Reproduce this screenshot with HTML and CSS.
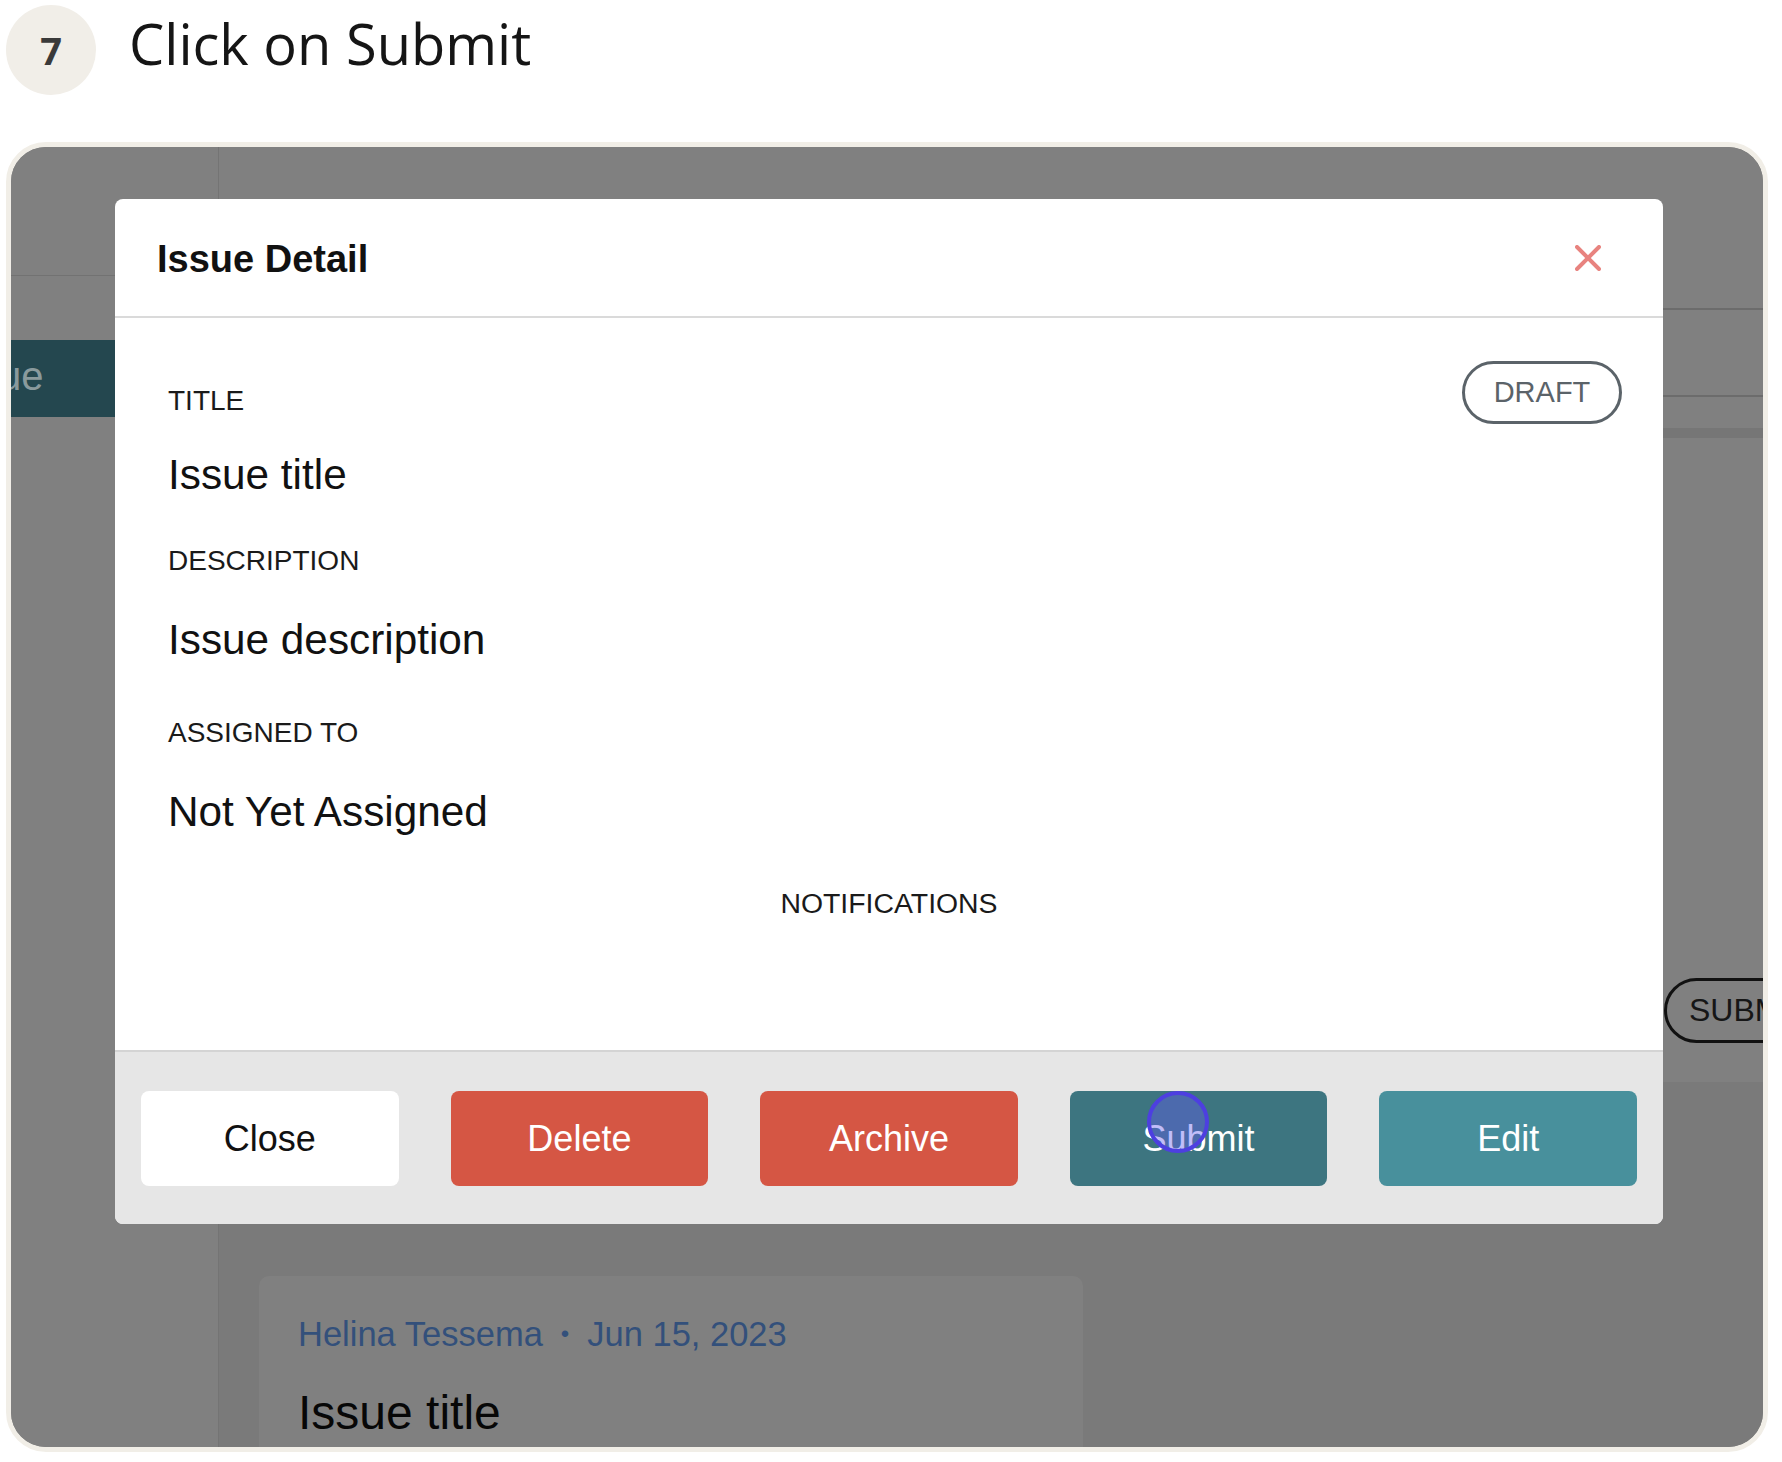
FILE: index.html
```html
<!DOCTYPE html>
<html lang="en">
<head>
<meta charset="utf-8">
<title>Click on Submit</title>
<link rel="stylesheet" href="styles.css">
</head>
<body>
<div class="page">
  <header class="step">
    <div class="step-num">7</div>
    <h1 class="step-title">Click on Submit</h1>
  </header>

  <div class="frame">
    <div class="app">
      <aside class="sidebar">
        <div class="sidebar-top"></div>
        <div class="new-btn"><span class="new-btn-label">ue</span></div>
      </aside>
      <main class="main">
        <div class="topbar"></div>
        <div class="tabs"></div>
        <div class="filters"></div>
        <div class="content">
          <div class="list">
            <div class="card">
              <div class="card-meta">Helina Tessema<span class="dot">•</span>Jun 15, 2023</div>
              <div class="card-title">Issue title</div>
            </div>
          </div>
          <div class="side">
            <span class="status-pill">SUBMITTED</span>
          </div>
        </div>
      </main>
    </div>

    <div class="modal">
      <div class="modal-header">
        <h2 class="modal-title">Issue Detail</h2>
        <svg class="modal-close" width="26" height="26" viewBox="0 0 26 26" aria-hidden="true">
          <path d="M2 2 L24 24 M24 2 L2 24" stroke="#e8837f" stroke-width="4" stroke-linecap="round" fill="none"/>
        </svg>
      </div>
      <div class="modal-body">
        <div class="body-top">
          <div class="fields">
            <div class="label">TITLE</div>
            <div class="value v-title">Issue title</div>
            <div class="label l-desc">DESCRIPTION</div>
            <div class="value v-desc">Issue description</div>
            <div class="label l-assign">ASSIGNED TO</div>
            <div class="value v-assign">Not Yet Assigned</div>
          </div>
          <span class="badge">DRAFT</span>
        </div>
        <div class="label notifications">NOTIFICATIONS</div>
      </div>
      <div class="modal-footer">
        <button class="btn btn-close">Close</button>
        <button class="btn btn-danger">Delete</button>
        <button class="btn btn-danger">Archive</button>
        <button class="btn btn-submit">Submit<span class="cursor"></span></button>
        <button class="btn btn-edit">Edit</button>
      </div>
    </div>
  </div>
</div>
</body>
</html>
```

FILE: styles.css
```css
* { box-sizing: border-box; }

html, body {
  margin: 0;
  background: #ffffff;
}

.page {
  padding: 5px 14px 0 6px;
  font-family: "Liberation Sans", Arial, sans-serif;
}

/* ---------- step header ---------- */
.step {
  display: flex;
  align-items: flex-start;
  height: 90px;
}

.step-num {
  width: 90px;
  height: 90px;
  border-radius: 50%;
  background: #f1eee8;
  color: #3a3a3a;
  font-family: "Open Sans", sans-serif;
  font-weight: 700;
  font-size: 38px;
  display: flex;
  align-items: center;
  justify-content: center;
  flex-shrink: 0;
}

.step-title {
  margin: 10px 0 0 33px;
  font-family: "Open Sans", sans-serif;
  font-weight: 400;
  font-size: 56px;
  line-height: 1;
  color: #151515;
}

/* ---------- screenshot frame ---------- */
.frame {
  position: relative;
  margin-top: 47px;
  height: 1310px;
  border: 5px solid #f1eee7;
  border-radius: 40px;
  overflow: hidden;
  background: #7a7a7a;
}

.app {
  display: flex;
  height: 100%;
}

.sidebar {
  width: 208px;
  flex-shrink: 0;
  background: #808080;
  border-right: 1px solid #747474;
}

.sidebar-top {
  height: 129px;
  border-bottom: 1px solid #727272;
}

.new-btn {
  margin-top: 64px;
  height: 77px;
  background: #24474f;
  overflow: hidden;
  white-space: nowrap;
}

.new-btn-label {
  display: block;
  margin-left: -12px;
  font-size: 40px;
  line-height: 72px;
  color: #8a9a9d;
}

.main {
  flex: 1;
  display: flex;
  flex-direction: column;
  min-width: 0;
  min-height: 0;
}

.topbar {
  flex-shrink: 0;
  height: 163px;
  background: #808080;
  border-bottom: 2px solid #6c6c6c;
}

.tabs {
  flex-shrink: 0;
  height: 87px;
  background: #808080;
  border-bottom: 2px solid #6c6c6c;
}

.filters {
  flex-shrink: 0;
  height: 41px;
  background: #808080;
  border-bottom: 10px solid #767676;
}

.content {
  flex: 1;
  min-height: 0;
  overflow: hidden;
  display: flex;
  align-items: flex-start;
  gap: 17px;
  padding-left: 40px;
  background: #7a7a7a;
}

.list {
  width: 824px;
  flex-shrink: 0;
  padding-top: 838px;
}

.card {
  height: 320px;
  background: #808080;
  border-radius: 10px;
  padding: 38px 39px 0;
}

.card-meta {
  font-size: 34.5px;
  line-height: 1.2;
  color: #33507b;
  white-space: nowrap;
}

.card-meta .dot {
  margin: 0 18px;
  font-size: 24px;
  vertical-align: 4px;
}

.card-title {
  margin-top: 29px;
  font-size: 48px;
  line-height: 1.2;
  color: #070707;
}

.side {
  width: 800px;
  flex-shrink: 0;
  height: 644px;
  background: #808080;
  padding: 540px 0 0 564px;
}

.status-pill {
  display: inline-flex;
  align-items: center;
  height: 65px;
  padding: 0 30px 0 22px;
  border: 3px solid #111;
  border-radius: 33px;
  font-size: 32px;
  color: #161616;
  white-space: nowrap;
}

/* ---------- modal ---------- */
.modal {
  position: absolute;
  left: 104px;
  top: 52px;
  width: 1548px;
  background: #ffffff;
  border-radius: 8px;
  overflow: hidden;
}

.modal-header {
  height: 119px;
  display: flex;
  align-items: center;
  justify-content: space-between;
  padding: 3px 62px 0 42px;
  border-bottom: 2px solid #dadada;
}

.modal-title {
  margin: 0;
  font-size: 38px;
  font-weight: 700;
  color: #111;
}

.modal-close { display: block; margin-top: -3px; }

.modal-body {
  height: 732px;
  padding: 43px 41px 0 41px;
}

.body-top {
  display: flex;
  justify-content: space-between;
  align-items: flex-start;
}

.fields {
  padding: 23px 0 0 12px;
}

.label {
  font-size: 28px;
  line-height: 33px;
  color: #1a1a1a;
}

.value {
  font-size: 42.3px;
  line-height: 49px;
  color: #111;
}

.v-title { margin-top: 33px; }
.l-desc { margin-top: 45px; }
.v-desc { margin-top: 38px; }
.l-assign { margin-top: 52px; }
.v-assign { margin-top: 38px; }

.notifications {
  margin-top: 51px;
  text-align: center;
  font-size: 28.4px;
}

.badge {
  display: flex;
  align-items: center;
  justify-content: center;
  width: 160px;
  height: 63px;
  border: 3px solid #5b6369;
  border-radius: 32px;
  font-size: 29px;
  color: #5b6369;
}

.modal-footer {
  display: flex;
  gap: 52px;
  padding: 39px 26px 38px;
  background: #e6e6e6;
  border-top: 2px solid #d4d4d4;
}

.btn {
  position: relative;
  flex: 1;
  height: 95px;
  border: none;
  border-radius: 8px;
  font-family: "Liberation Sans", Arial, sans-serif;
  font-size: 36px;
  color: #ffffff;
  padding: 0;
}

.btn-close { background: #ffffff; color: #111; }
.btn-danger { background: #d55644; }
.btn-submit { background: #3d7580; }
.btn-edit { background: #48909c; }

.cursor {
  position: absolute;
  left: 77px;
  top: 0;
  width: 62px;
  height: 62px;
  border-radius: 50%;
  border: 4px solid #4d3fe0;
  background: rgba(100, 90, 240, 0.4);
}
```
